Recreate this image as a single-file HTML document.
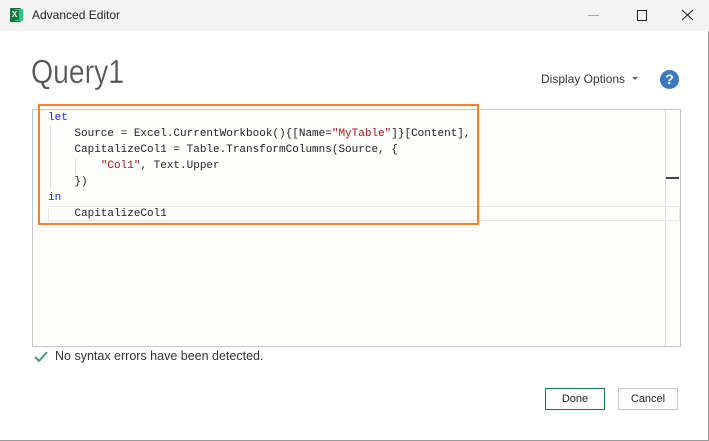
<!DOCTYPE html><html><head><style>
body{margin:0;width:709px;height:441px;background:#fff;position:relative;overflow:hidden;font-family:"Liberation Sans",sans-serif}
.tb{position:absolute;left:0;top:0;width:709px;height:31px;background:#f3f3f3}
.a{position:absolute}
.code{position:absolute;font-family:"Liberation Mono",monospace;font-size:11px;color:#222;white-space:pre;line-height:16px}
.k{color:#1030d0}.s{color:#a31515}
</style></head><body>
<div class="tb"></div>
<div class="a" style="left:10px;top:8px;width:11px;height:14px;background:#1d6f42;border-radius:1px"></div>
<div class="a" style="left:15px;top:9px;width:8px;height:12px;background:#33c481"></div>
<div class="a" style="left:10px;top:10px;width:9px;height:10px;background:#107c41;color:#fff;font-size:8px;font-weight:bold;text-align:center;line-height:10px">X</div>
<div class="a" style="left:32px;top:8px;font-size:12px;color:#222">Advanced Editor</div>
<div class="a" style="left:588px;top:15px;width:11px;height:1px;background:#aaa"></div>
<div class="a" style="left:637px;top:10px;width:8px;height:9px;border:1px solid #222"></div>
<svg class="a" style="left:500px;top:0" width="209" height="31"><path d="M182 10L193 20M193 10L182 20" stroke="#222" stroke-width="1.1"/></svg>
<div class="a" style="left:708px;top:31px;width:1px;height:410px;background:#999"></div>
<div class="a" style="left:0;top:440px;width:709px;height:1px;background:#999"></div>
<div class="a" style="left:31px;top:53px;font-size:33px;color:#555;transform:scaleX(0.86);transform-origin:left;-webkit-text-stroke:0.3px #fff">Query1</div>
<div class="a" style="left:541px;top:72px;font-size:12px;color:#333">Display Options</div>
<div class="a" style="left:632px;top:77px;border:3px solid transparent;border-top:3px solid #666"></div>
<div class="a" style="left:660px;top:70px;width:19px;height:19px;border-radius:50%;background:#3a78c0;color:#fff;font-size:14px;font-weight:bold;text-align:center;line-height:19px">?</div>
<div class="a" style="left:32px;top:109px;width:647px;height:236px;border:1px solid #c6c6c6;background:#fdfdfc"></div>
<div class="a" style="left:665px;top:110px;width:1px;height:236px;background:#ddd"></div>
<div class="a" style="left:666px;top:177px;width:13px;height:2px;background:#444"></div>
<div class="a" style="left:48px;top:206px;width:630px;height:13px;border:1px solid #e8e8e8"></div>
<div class="a" style="left:50px;top:126px;width:1px;height:62px;background:#ddd"></div>
<div class="a" style="left:75px;top:159px;width:1px;height:15px;background:#ddd"></div>
<div class="code" style="left:48px;top:110px"><span class="k">let</span>
    Source = Excel.CurrentWorkbook(){[Name=<span class="s">"MyTable"</span>]}[Content],
    CapitalizeCol1 = Table.TransformColumns(Source, {
        <span class="s">"Col1"</span>, Text.Upper
    })
<span class="k">in</span>
    CapitalizeCol1</div>
<div class="a" style="left:38px;top:104px;width:437px;height:117px;border:2.5px solid #f4812b"></div>
<svg class="a" style="left:33px;top:350px" width="16" height="14"><path d="M2 7L6 11L14 2" stroke="#4a9a7a" stroke-width="2" fill="none"/></svg>
<div class="a" style="left:55px;top:349px;font-size:12.5px;color:#333">No syntax errors have been detected.</div>
<div class="a" style="left:545px;top:388px;width:58px;height:20px;border:1px solid #217346;font-size:11px;color:#222;text-align:center;line-height:20px">Done</div>
<div class="a" style="left:618px;top:388px;width:58px;height:20px;border:1px solid #c8c8c8;font-size:11px;color:#222;text-align:center;line-height:20px">Cancel</div>
</body></html>
